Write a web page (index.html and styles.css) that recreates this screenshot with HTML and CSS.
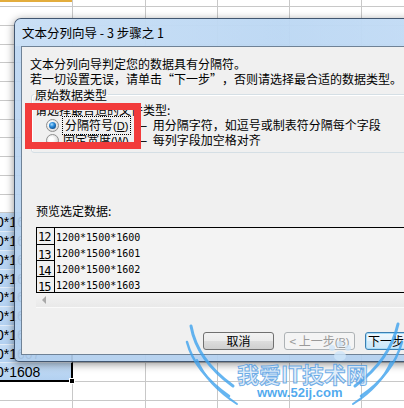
FILE: index.html
```html
<!DOCTYPE html>
<html lang="zh-CN">
<head>
<meta charset="utf-8">
<title>文本分列向导</title>
<link rel="stylesheet" href="styles.css">
</head>
<body>
<div class="sheet">
  <div class="row top"><div class="hdr-a"></div></div>
  <div class="row"></div>
  <div class="row"></div>
  <div class="row"></div>
  <div class="row"></div>
  <div class="row"></div>
  <div class="row"></div>
  <div class="row"></div>
  <div class="row"></div>
  <div class="row"></div>
  <div class="row"></div>
  <div class="row"></div>
  <div class="row"><div class="sel"><span>1200*1500*1600</span></div></div>
  <div class="row"><div class="sel"><span>1200*1500*1601</span></div></div>
  <div class="row"><div class="sel"><span>1200*1500*1602</span></div></div>
  <div class="row"><div class="sel"><span>1200*1500*1603</span></div></div>
  <div class="row"><div class="sel"><span>1200*1500*1604</span></div></div>
  <div class="row"><div class="sel"><span>1200*1500*1605</span></div></div>
  <div class="row"><div class="sel"><span>1200*1500*1606</span></div></div>
  <div class="row"><div class="sel"><span>1200*1500*1607</span></div></div>
  <div class="row"><div class="sel last"><span>1200*1500*1608</span><i class="handle"></i></div></div>
  <div class="row"></div>
  <div class="row"></div>
</div>

<div class="dialog">
  <div class="titlebar">文本分列向导 - 3 步骤之 1</div>
  <div class="client">
    <p class="intro">文本分列向导判定您的数据具有分隔符。<br>若一切设置无误，请单击<span class="q open">“</span>下一步<span class="q close">”</span>，否则请选择最合适的数据类型。</p>
    <fieldset class="group">
      <legend>原始数据类型</legend>
      <div class="prompt">请选择最合适的文件类型:</div>
      <div class="option">
        <span class="radio checked"></span>
        <span class="label"><span class="focus">分隔符号<span class="key">(<u>D</u>)</span></span></span>
        <span class="desc"><span class="dash">–</span>用分隔字符，如逗号或制表符分隔每个字段</span>
      </div>
      <div class="option">
        <span class="radio"></span>
        <span class="label">固定宽度<span class="key">(<u>W</u>)</span></span>
        <span class="desc"><span class="dash">–</span>每列字段加空格对齐</span>
      </div>
    </fieldset>
    <div class="preview-label">预览选定数据:</div>
    <div class="preview">
      <div class="prow"><span class="num">12</span><span class="data">1200*1500*1600</span></div>
      <div class="prow"><span class="num">13</span><span class="data">1200*1500*1601</span></div>
      <div class="prow"><span class="num">14</span><span class="data">1200*1500*1602</span></div>
      <div class="prow"><span class="num">15</span><span class="data">1200*1500*1603</span></div>
    </div>
    <div class="hscroll"><span class="arrow"></span></div>
    <div class="buttons">
      <div class="btn">取消</div>
      <div class="btn disabled">&lt; 上一步<span class="key">(<u>B</u>)</span></div>
      <div class="btn default">下一步<span class="key">(<u>N</u>)</span> &gt;</div>
    </div>
  </div>
</div>

<div class="callout"></div>

<div class="watermark">
  <svg class="wings" width="219" height="88" viewBox="0 0 219 88">
    <g fill="none" stroke="#3fa3ee" stroke-linecap="round" opacity="0.8">
      <path d="M6 6 Q12 40 48 66" stroke-width="3"/>
      <path d="M2 22 Q10 52 44 76" stroke-width="2.5"/>
      <path d="M12 40 Q22 64 52 84" stroke-width="2"/>
      <path d="M213 4 Q205 40 170 66" stroke-width="3"/>
      <path d="M217 22 Q208 54 176 76" stroke-width="2.5"/>
      <path d="M206 42 Q196 66 168 84" stroke-width="2"/>
    </g>
    <g fill="#cfe6fa" opacity="0.8">
      <circle cx="147" cy="28" r="3"/>
      <circle cx="155" cy="24" r="3"/>
      <circle cx="163" cy="28" r="3"/>
      <ellipse cx="155" cy="36" rx="6" ry="5"/>
    </g>
  </svg>
  <div class="wm-title">我爱IT技术网</div>
  <div class="wm-url">www.52ij.com</div>
</div>
</body>
</html>
```

FILE: styles.css
```css
* { box-sizing: border-box; margin: 0; padding: 0; }

html, body {
  width: 404px;
  height: 408px;
  overflow: hidden;
  background: #fff;
}

body {
  position: relative;
  font-family: "Noto Sans CJK SC", "Liberation Sans", sans-serif;
  font-size: 12px;
  color: #000;
}

/* spreadsheet behind the dialog */
.sheet {
  display: flex;
  flex-direction: column;
  height: 408px;
  background:
    linear-gradient(#c8c8c8, #c8c8c8) 72px 0 / 1px 100% no-repeat,
    linear-gradient(#c8c8c8, #c8c8c8) 145px 0 / 1px 100% no-repeat,
    linear-gradient(#c8c8c8, #c8c8c8) 217px 0 / 1px 100% no-repeat,
    linear-gradient(#c8c8c8, #c8c8c8) 289px 0 / 1px 100% no-repeat,
    linear-gradient(#c8c8c8, #c8c8c8) 361px 0 / 1px 100% no-repeat,
    #fff;
}

.row {
  flex: none;
  height: 18.75px;
  border-bottom: 1px solid #c8c8c8;
  display: flex;
}

.row.top { height: 7px; }

.hdr-a {
  width: 72px;
  height: 2px;
  background: #e3ad3d;
}

.sel {
  width: 73px;
  height: calc(100% + 1px);
  background: linear-gradient(#c4dcf5, #b3d1f1);
  border-right: 2px solid #000;
  border-bottom: 1px solid #e2ecf8;
  white-space: nowrap;
  font-family: "Liberation Sans", sans-serif;
  font-size: 14px;
  line-height: 18px;
  position: relative;
}

.sel span { margin-left: -64px; }

.sel.last { border-bottom: 2px solid #000; }

.handle {
  position: absolute;
  right: -4px;
  bottom: -4px;
  width: 6px;
  height: 6px;
  background: #000;
  border: 1px solid #fff;
}

/* dialog window */
.dialog {
  position: absolute;
  left: 14px;
  top: 18px;
  width: 440px;
  height: 344px;
  border: 1px solid rgba(45, 65, 90, 0.85);
  border-radius: 7px 7px 5px 5px;
  background: linear-gradient(to bottom, rgba(190, 215, 242, 0.93), rgba(178, 207, 238, 0.93));
  box-shadow: 0 2px 8px rgba(0, 0, 0, 0.45);
  display: flex;
  flex-direction: column;
}

.titlebar {
  flex: none;
  height: 27px;
  line-height: 27px;
  padding-left: 7px;
  font-size: 12.5px;
  border-radius: 6px 6px 0 0;
  background: linear-gradient(to right, rgba(205, 226, 247, 0.7), rgba(185, 216, 245, 0.4) 60%, rgba(200, 224, 248, 0.6));
}

.client {
  flex: 1;
  margin: 0 0 6px 6px;
  border: 1px solid #6f8296;
  background: #f0f0f0;
  display: flex;
  flex-direction: column;
  align-items: flex-start;
}

.intro {
  padding: 9px 0 0 8px;
  line-height: 15px;
  white-space: nowrap;
}

.q {
  display: inline-block;
  width: 12px;
}

.q.open { text-align: right; }
.q.close { text-align: left; }

.group {
  margin: 1px 0 0 9px;
  width: 400px;
  padding: 0 0 4px 2px;
  border: 1px solid #d5dfe5;
  border-radius: 3px;
  box-shadow: inset 1px 1px 0 #fff;
}

.group legend {
  padding: 0 1px;
  line-height: 15px;
}

.prompt {
  line-height: 15px;
  padding-left: 1px;
}

.option {
  display: flex;
  align-items: center;
  height: 15px;
  line-height: 15px;
  white-space: nowrap;
}

.prompt + .option { margin-top: 1px; }

.radio {
  flex: none;
  width: 13px;
  height: 13px;
  margin-left: 12px;
  border: 1px solid #8e8f8f;
  border-radius: 50%;
  background: radial-gradient(circle at 40% 40%, #fff 20%, #e2e2e2 60%, #cfcfcf);
  display: flex;
  align-items: center;
  justify-content: center;
}

.radio.checked::after {
  content: "";
  width: 7px;
  height: 7px;
  border-radius: 50%;
  background: radial-gradient(circle at 40% 35%, #a9dcff 0, #2f8fdc 35%, #0c4f93 75%);
}

.label {
  flex: none;
  width: 71px;
  margin-left: 4px;
}

.focus {
  display: inline-block;
  outline: 1px dotted #000;
  outline-offset: 0;
  padding: 0 2px;
  line-height: 15px;
}

.key {
  font-family: "Liberation Sans", sans-serif;
  font-size: 11px;
}

.desc { margin-left: 6px; }

.dash {
  font-family: "Liberation Sans", sans-serif;
  margin-right: 6px;
}

.preview-label {
  margin: 50px 0 0 14px;
  line-height: 15px;
}

.preview {
  margin: 9px 0 0 14px;
  width: 400px;
  height: 66px;
  border: 1px solid #000;
  border-right: none;
  background: #f3f3f3;
}

.prow {
  display: flex;
  height: 16px;
}

.num {
  flex: none;
  width: 18px;
  height: 16px;
  border-right: 1px solid #000;
  border-top: 1px solid #000;
  font-family: "DejaVu Sans Mono", monospace;
  font-size: 12px;
  line-height: 12px;
  padding: 4px 0 0 1px;
  letter-spacing: -1px;
  overflow: hidden;
  background: #f0f0f0;
}

.prow:first-child .num { border-top: none; padding-top: 3px; }

.data {
  font-family: "DejaVu Sans Mono", monospace;
  font-size: 10px;
  line-height: 19px;
  height: 16px;
  padding-left: 1px;
}

.hscroll {
  margin-left: 14px;
  width: 400px;
  height: 15px;
  background: linear-gradient(#f3f3f3, #e9e9e9);
  border-bottom: 1px solid #fafafa;
  display: flex;
  align-items: center;
  padding-left: 6px;
}

.arrow {
  width: 0;
  height: 0;
  border-top: 4px solid transparent;
  border-bottom: 4px solid transparent;
  border-right: 4px solid #a8a8a8;
}

.buttons {
  display: flex;
  gap: 10px;
  margin: 24px 0 0 181px;
}

.btn {
  flex: none;
  width: 71px;
  height: 18px;
  border: 1px solid #707070;
  border-radius: 3px;
  background: linear-gradient(#f2f2f2 0, #ebebeb 50%, #dddddd 50%, #cfcfcf 100%);
  line-height: 16px;
  text-align: center;
  white-space: nowrap;
  overflow: hidden;
}

.btn.disabled {
  border-color: #adb2b5;
  background: #f4f4f4;
  color: #9a9a9a;
}

.btn.default {
  border-color: #3c7fb1;
  box-shadow: inset 0 0 0 1px #a6dcf9;
  background: linear-gradient(#f1f8fd, #e3f2fb 50%, #d5ecfa 50%, #cbe6f8);
  text-align: left;
  padding-left: 2px;
}

/* red annotation */
.callout {
  position: absolute;
  left: 25px;
  top: 103px;
  width: 116px;
  height: 46px;
  border: 7px solid #f23b3b;
}

/* watermark */
.watermark {
  position: absolute;
  left: 185px;
  top: 320px;
  width: 219px;
  height: 88px;
  pointer-events: none;
}

.wings {
  position: absolute;
  left: 0;
  top: 0;
}

.wm-title {
  position: absolute;
  left: 52px;
  top: 40px;
  font-size: 22px;
  font-weight: 700;
  line-height: 26px;
  color: rgba(215, 232, 248, 0.75);
  -webkit-text-stroke: 1px rgba(70, 150, 225, 0.75);
}

.wm-url {
  position: absolute;
  left: 72px;
  top: 66px;
  font-family: "Liberation Sans", sans-serif;
  font-size: 13px;
  font-weight: 700;
  line-height: 14px;
  color: rgba(50, 155, 235, 0.85);
}
```
